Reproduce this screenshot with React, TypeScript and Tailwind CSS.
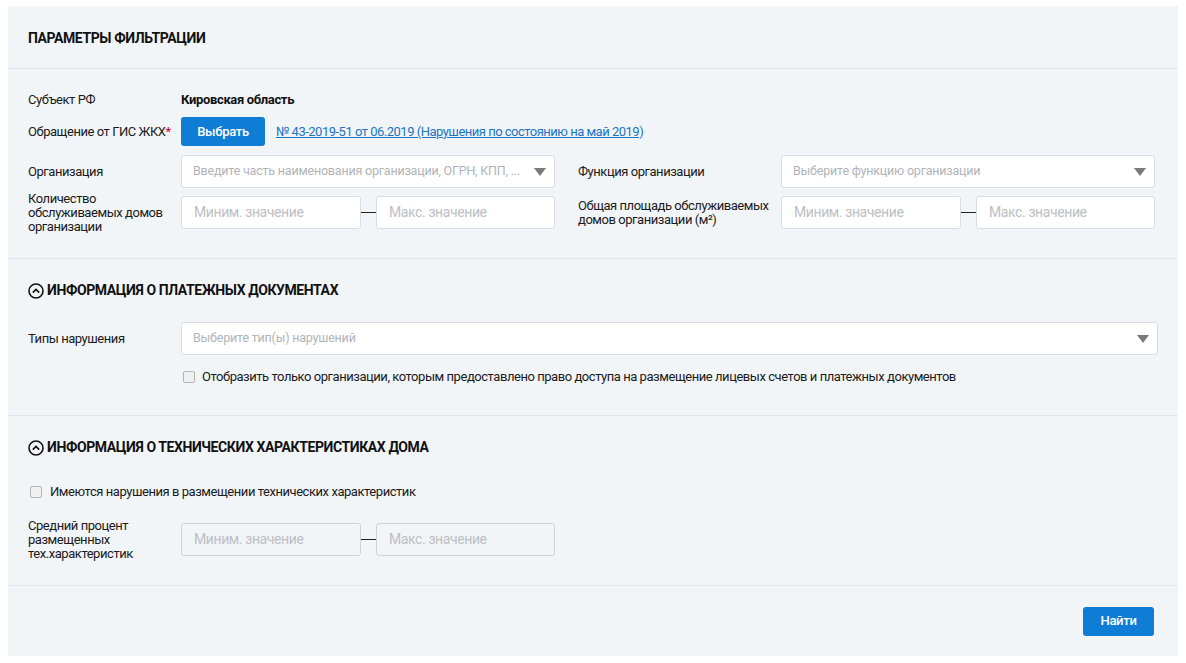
import React from "react";

const font = { fontFamily: "Roboto, 'Noto Sans', sans-serif" };

function Caret() {
  return (
    <svg width="12" height="8" viewBox="0 0 12 8" className="shrink-0">
      <path d="M0 0 L12 0 L6 8 Z" fill="#7a7a7a" />
    </svg>
  );
}

function CircleUp() {
  return (
    <svg width="16" height="16" viewBox="0 0 16 16" className="shrink-0">
      <circle cx="8" cy="8" r="7" fill="none" stroke="#111" strokeWidth="1.6" />
      <path d="M4.8 9.6 L8 6.4 L11.2 9.6" fill="none" stroke="#111" strokeWidth="1.6" />
    </svg>
  );
}

function Select({ placeholder }: { placeholder: string }) {
  return (
    <div className="flex h-[33px] w-full items-center justify-between rounded-[3px] border border-[#d9dde1] bg-white pl-[11px] pr-[8px]">
      <span className="truncate text-[12.5px] tracking-[-0.2px] text-[#b0b4b8]">{placeholder}</span>
      <Caret />
    </div>
  );
}

function Range({ disabled }: { disabled?: boolean }) {
  const box = disabled
    ? "bg-[#f2f5f8] border-[#d0d3d6]"
    : "bg-white border-[#d9dde1]";
  return (
    <div className="flex w-[374px] shrink-0 items-center">
      <div className={`flex h-[33px] w-[180px] items-center rounded-[3px] border px-[12px] ${box}`}>
        <span className="text-[14px] tracking-[-0.4px] text-[#bcc0c4]">Миним. значение</span>
      </div>
      <div className="h-px w-[15px] bg-[#222]" />
      <div className={`flex h-[33px] flex-1 items-center rounded-[3px] border px-[12px] ${box}`}>
        <span className="text-[14px] tracking-[-0.4px] text-[#bcc0c4]">Макс. значение</span>
      </div>
    </div>
  );
}

function Checkbox() {
  return <div className="h-[12px] w-[12px] shrink-0 rounded-[2px] border border-[#b5b5b5] bg-[#f0f0f0]" />;
}

const label = "text-[13px] leading-[14px] tracking-[-0.45px] text-[#1a1a1a]";
const heading = "text-[14px] font-bold tracking-[-0.4px] text-[#111]";

export default function App() {
  return (
    <div className="min-h-[663px] bg-white px-[8px] pt-[6px]" style={font}>
      <div className="w-[1170px] bg-[#f2f5f8]">
        <div className="flex h-[62px] items-center px-[20px] pt-[3px]">
          <h1 className={heading}>ПАРАМЕТРЫ ФИЛЬТРАЦИИ</h1>
        </div>
        <div className="h-px bg-[#e2e6ea]" />

        <div className="px-[20px] pb-[29px] pt-[22px]">
          <div className="flex h-[18px] items-center">
            <div className={`w-[153px] ${label}`}>Субъект РФ</div>
            <div className="text-[13px] font-bold tracking-[-0.35px] text-[#111]">Кировская область</div>
          </div>
          <div className="mt-[8px] flex h-[29px] items-center">
            <div className={`w-[153px] ${label}`}>
              Обращение от ГИС ЖКХ<span className="text-[#d0021b]">*</span>
            </div>
            <button className="h-[29px] w-[84px] rounded-[3px] bg-[#0f7dd6] text-[13px] font-medium tracking-[-0.3px] text-white">
              Выбрать
            </button>
            <a className="ml-[11px] text-[13px] tracking-[-0.5px] text-[#1b74c4] underline" href="#">
              № 43-2019-51 от 06.2019 (Нарушения по состоянию на май 2019)
            </a>
          </div>
          <div className="mt-[9px] grid grid-cols-[527px_577px] gap-x-[23px] gap-y-[8px]">
            <div className="flex h-[33px] items-center">
              <div className={`w-[153px] shrink-0 ${label}`}>Организация</div>
              <Select placeholder="Введите часть наименования организации, ОГРН, КПП, ..." />
            </div>
            <div className="flex h-[33px] items-center">
              <div className={`w-[203px] shrink-0 ${label}`}>Функция организации</div>
              <Select placeholder="Выберите функцию организации" />
            </div>
            <div className="flex h-[33px] items-center">
              <div className={`w-[153px] shrink-0 ${label}`}>Количество обслуживаемых домов организации</div>
              <Range />
            </div>
            <div className="flex h-[33px] items-center">
              <div className={`w-[203px] shrink-0 ${label}`}>
                Общая площадь обслуживаемых домов организации (м²)
              </div>
              <Range />
            </div>
          </div>
        </div>
        <div className="h-px bg-[#e2e6ea]" />

        <div className="px-[20px] pb-[31px] pt-[21px]">
          <div className="flex items-center gap-[3px]">
            <CircleUp />
            <h2 className={heading}>ИНФОРМАЦИЯ О ПЛАТЕЖНЫХ ДОКУМЕНТАХ</h2>
          </div>
          <div className="mt-[21px] flex items-center">
            <div className={`w-[153px] shrink-0 ${label}`}>Типы нарушения</div>
            <Select placeholder="Выберите тип(ы) нарушений" />
          </div>
          <div className="mt-[15px] flex items-center gap-[7px] pl-[155px]">
            <Checkbox />
            <span className={label}>
              Отобразить только организации, которым предоставлено право доступа на размещение лицевых счетов и платежных документов
            </span>
          </div>
        </div>
        <div className="h-px bg-[#e2e6ea]" />

        <div className="px-[20px] pb-[29px] pt-[21px]">
          <div className="flex items-center gap-[3px]">
            <CircleUp />
            <h2 className={heading}>ИНФОРМАЦИЯ О ТЕХНИЧЕСКИХ ХАРАКТЕРИСТИКАХ ДОМА</h2>
          </div>
          <div className="mt-[27px] flex items-center gap-[8px] pl-[2px]">
            <Checkbox />
            <span className={label}>Имеются нарушения в размещении технических характеристик</span>
          </div>
          <div className="mt-[24px] flex h-[33px] items-center">
            <div className={`w-[153px] shrink-0 ${label}`}>Средний процент размещенных тех.характеристик</div>
            <Range disabled />
          </div>
        </div>
        <div className="h-px bg-[#e2e6ea]" />

        <div className="flex h-[70px] items-center justify-end px-[24px]">
          <button className="h-[29px] w-[71px] rounded-[3px] bg-[#0f7dd6] text-[13px] font-medium tracking-[-0.3px] text-white">
            Найти
          </button>
        </div>
      </div>
    </div>
  );
}
